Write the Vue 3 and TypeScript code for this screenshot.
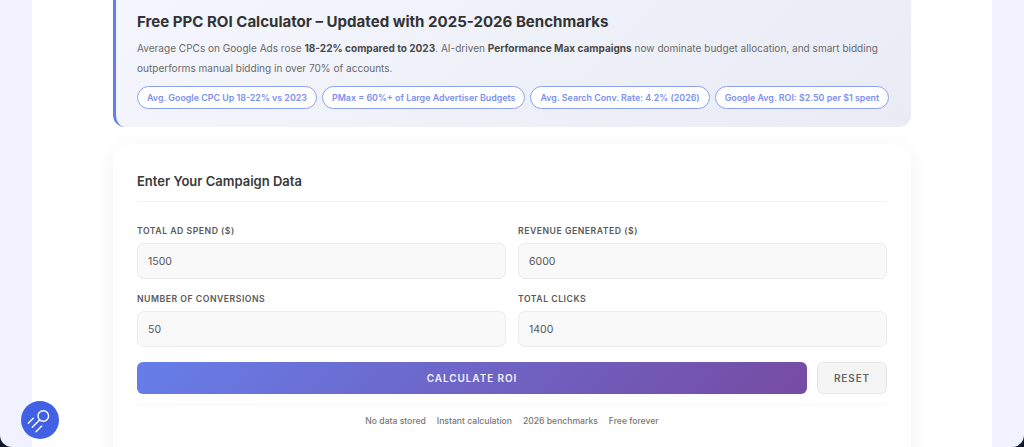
<script setup lang="ts">
interface Field {
  label: string;
  value: string;
}

const chips: string[] = [
  'Avg. Google CPC Up 18-22% vs 2023',
  'PMax = 60%+ of Large Advertiser Budgets',
  'Avg. Search Conv. Rate: 4.2% (2026)',
  'Google Avg. ROI: $2.50 per $1 spent',
];

const fields: Field[] = [
  { label: 'Total Ad Spend ($)', value: '1500' },
  { label: 'Revenue Generated ($)', value: '6000' },
  { label: 'Number of Conversions', value: '50' },
  { label: 'Total Clicks', value: '1400' },
];

const notes: string[] = ['No data stored', 'Instant calculation', '2026 benchmarks', 'Free forever'];
</script>

<template>
  <div class="window">
    <div class="page">
      <div class="column">
        <section class="intro">
          <h2 class="intro-title">Free PPC ROI Calculator – Updated with 2025-2026 Benchmarks</h2>
          <p class="intro-text">
            Average CPCs on Google Ads rose <strong>18-22% compared to 2023</strong>. AI-driven
            <strong>Performance Max campaigns</strong> now dominate budget allocation, and smart bidding
            outperforms manual bidding in over 70% of accounts.
          </p>
          <div class="chips">
            <span v-for="chip in chips" :key="chip" class="chip">{{ chip }}</span>
          </div>
        </section>

        <section class="card">
          <h3 class="card-title">Enter Your Campaign Data</h3>
          <div class="fields">
            <div v-for="field in fields" :key="field.label" class="field">
              <label class="field-label">{{ field.label }}</label>
              <input class="field-input" type="text" :value="field.value" />
            </div>
          </div>
          <div class="actions">
            <button class="btn-calc">Calculate ROI</button>
            <button class="btn-reset">Reset</button>
          </div>
          <div class="notes">
            <span v-for="note in notes" :key="note">{{ note }}</span>
          </div>
        </section>
      </div>

      <button class="fab" aria-label="Search">
        <svg viewBox="0 0 38 38" width="38" height="38" fill="none" stroke="#fff" stroke-width="1.4" stroke-linecap="round">
          <circle cx="22.3" cy="15" r="5.3" />
          <path d="M7.3 22.3 L12.3 17.3" />
          <path d="M11.3 26.3 L18.4 19.2" />
          <path d="M15 30.7 L20.7 25" />
        </svg>
      </button>
    </div>
  </div>
</template>

<style scoped>
.window {
  width: 1024px;
  height: 447px;
  background: #0c1a2c;
}

.page {
  position: relative;
  height: 100%;
  overflow: hidden;
  border-radius: 0 0 12px 12px;
  background: #f0f3ff;
  font-family: Inter, "Liberation Sans", sans-serif;
}

.column {
  display: flow-root;
  width: 960px;
  height: 100%;
  margin: 0 auto;
  padding: 0 81px;
  box-sizing: border-box;
  background: #fff;
}

.intro {
  margin-top: -14px;
  padding: 26px 21px 0 21px;
  height: 141px;
  box-sizing: border-box;
  border-left: 3px solid #667eea;
  border-radius: 12px;
  background: linear-gradient(135deg, #f5f6fd 0%, #e9ecf5 100%);
}

.intro-title {
  margin: 0;
  font-size: 15.05px;
  line-height: 20px;
  font-weight: 700;
  color: #333;
}

.intro-text {
  margin: 7px 0 0;
  font-size: 10.05px;
  line-height: 19.5px;
  color: #6a6a6a;
}

.intro-text strong {
  font-weight: 700;
  color: #4a4a4a;
}

.chips {
  display: flex;
  gap: 5px;
  margin-top: 8px;
}

.chip {
  height: 23px;
  padding: 0 9px;
  box-sizing: border-box;
  display: flex;
  align-items: center;
  border: 1px solid #8c9ff0;
  border-radius: 12px;
  background: #fff;
  font-size: 8.9px;
  font-weight: 600;
  color: #7c90f0;
  white-space: nowrap;
}

.card {
  margin-top: 18px;
  height: 330px;
  padding: 26px 24px;
  box-sizing: border-box;
  border-radius: 14px;
  background: #fff;
  box-shadow: 0 4px 24px rgba(0, 0, 0, 0.05);
}

.card-title {
  margin: 0;
  padding-bottom: 9px;
  border-bottom: 1px solid #f0f0f0;
  font-size: 13px;
  line-height: 21px;
  font-weight: 600;
  color: #3a3a3a;
}

.fields {
  display: grid;
  grid-template-columns: 1fr 1fr;
  column-gap: 12px;
  row-gap: 15px;
  margin-top: 24px;
}

.field {
  display: flex;
  flex-direction: column;
  gap: 6px;
}

.field-label {
  font-size: 8.7px;
  line-height: 11px;
  font-weight: 600;
  letter-spacing: 0.5px;
  text-transform: uppercase;
  color: #5a5a5a;
}

.field-input {
  height: 36px;
  padding: 0 10px;
  box-sizing: border-box;
  border: 1px solid #ebebeb;
  border-radius: 7px;
  background: #f9f9f9;
  font-family: inherit;
  font-size: 10.5px;
  color: #555;
  outline: none;
}

.actions {
  display: flex;
  gap: 10px;
  margin-top: 15px;
}

.btn-calc,
.btn-reset {
  height: 32px;
  box-sizing: border-box;
  border-radius: 6px;
  font-family: inherit;
  font-size: 10px;
  font-weight: 600;
  letter-spacing: 0.9px;
  text-transform: uppercase;
}

.btn-calc {
  flex: 1;
  border: none;
  background: linear-gradient(135deg, #667eea 0%, #764ba2 100%);
  color: #f4f2fb;
}

.btn-reset {
  width: 70px;
  border: 1px solid #e6e6e6;
  background: #f5f5f5;
  color: #666;
}

.notes {
  display: flex;
  justify-content: center;
  gap: 11px;
  margin-top: 10px;
  padding-top: 11px;
  border-top: 1px solid #f7f7f7;
  font-size: 8.6px;
  font-weight: 500;
  color: #777;
}

.fab {
  position: absolute;
  left: 21px;
  top: 401px;
  width: 38px;
  height: 38px;
  padding: 0;
  display: flex;
  align-items: center;
  justify-content: center;
  border: none;
  border-radius: 50%;
  background: #4160e4;
}
</style>
